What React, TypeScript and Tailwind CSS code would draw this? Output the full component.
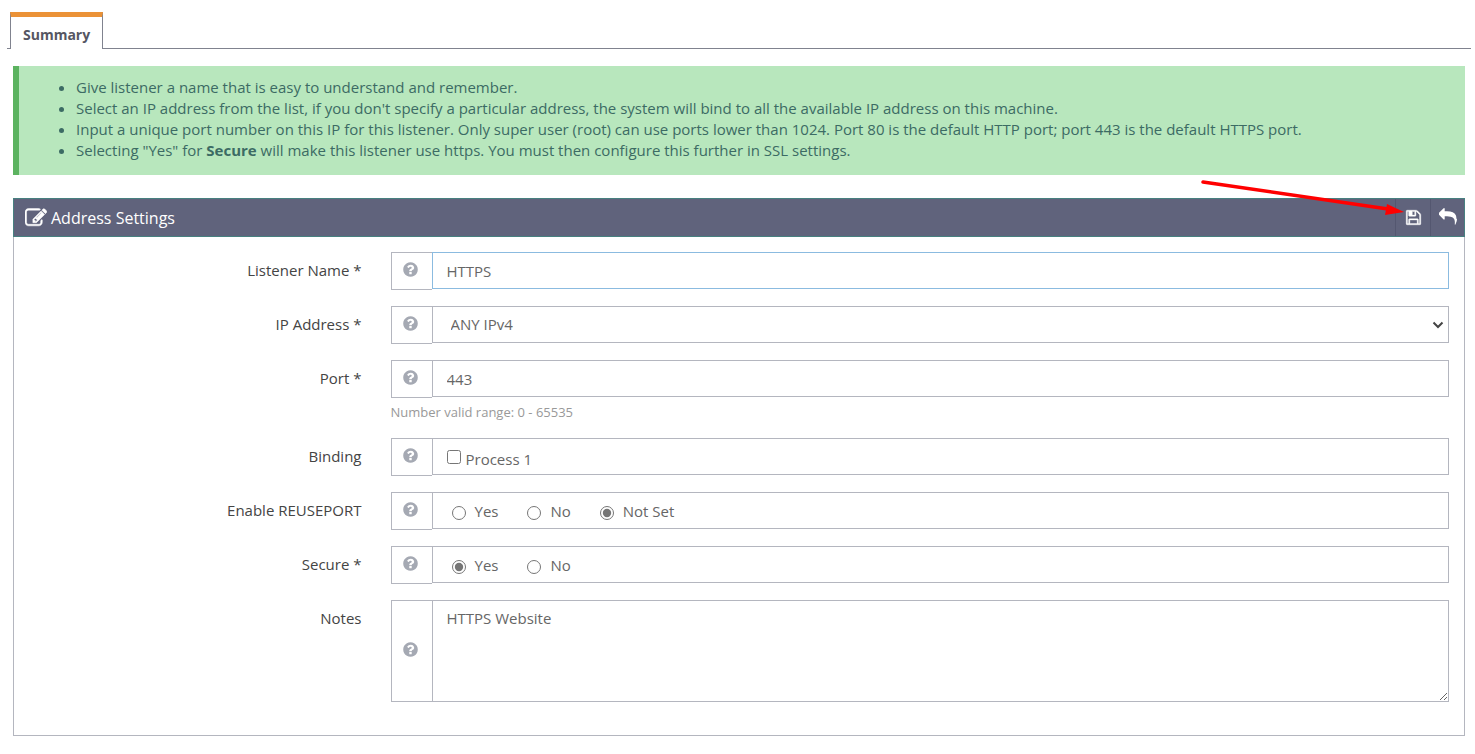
import { useState } from "react";
import type { ReactNode } from "react";

const iconPaths = {
  edit: "M888 1184l116-116-152-152-116 116v56h96v96h56zm440-720q-16-16-33 1l-350 350q-17 17-1 33t33-1l350-350q17-17 1-33zm80 594v190q0 119-84.5 203.5t-203.5 84.5h-832q-119 0-203.5-84.5t-84.5-203.5v-832q0-119 84.5-203.5t203.5-84.5h832q63 0 117 25 15 7 18 23 3 17-9 29l-49 49q-14 14-32 8-23-6-45-6h-832q-66 0-113 47t-47 113v832q0 66 47 113t113 47h832q66 0 113-47t47-113v-126q0-13 9-22l64-64q15-15 35-7t20 29zm-96-738l288 288-672 672h-288v-288zm444 132l-92 92-288-288 92-92q28-28 68-28t68 28l152 152q28 28 28 68t-28 68z",
  save: "M512 1536h768v-384h-768v384zm896 0h128v-896q0-14-10-38.5t-20-34.5l-281-281q-10-10-34-20t-39-10v416q0 40-28 68t-68 28h-576q-40 0-68-28t-28-68v-416h-128v1280h128v-416q0-40 28-68t68-28h832q40 0 68 28t28 68v416zm-384-928v-320q0-13-9.5-22.5t-22.5-9.5h-192q-13 0-22.5 9.5t-9.5 22.5v320q0 13 9.5 22.5t22.5 9.5h192q13 0 22.5-9.5t9.5-22.5zm640 32v928q0 40-28 68t-68 28h-1344q-40 0-68-28t-28-68v-1344q0-40 28-68t68-28h928q40 0 88 20t76 48l280 280q28 28 48 76t20 88z",
  reply: "M1792 1120q0 166-127 451-3 7-10.5 24t-13.5 30-13 22q-12 17-28 17-15 0-23.5-10t-8.5-25q0-9 2.5-26.5t2.5-23.5q5-68 5-123 0-112-19.5-200.5t-54-153.5-89-112-117.5-78.5-146-51-168.5-19.5-192-8h-224v256q0 26-19 45t-45 19-45-19l-512-512q-19-19-19-45t19-45l512-512q19-19 45-19t45 19 19 45v256h224q713 0 884 403 56 134 56 333z",
  help: "M1024 1376v-192q0-14-9-23t-23-9h-192q-14 0-23 9t-9 23v192q0 14 9 23t23 9h192q14 0 23-9t9-23zm256-672q0-88-55.5-163t-138.5-116-170-41q-243 0-371 213-15 24 8 42l132 100q7 6 19 6 16 0 25-12 53-68 86-92 34-24 86-24 48 0 85.5 26t37.5 59q0 38-20 61t-68 45q-63 28-115.5 86.5t-52.5 125.5v36q0 14 9 23t23 9h192q14 0 23-9t9-23q0-19 21.5-49.5t54.5-49.5q32-18 49-28.5t46-35 44.5-48 28-60.5 12.5-81zm384 192q0 209-103 385.5t-279.5 279.5-385.5 103-385.5-103-279.5-279.5-103-385.5 103-385.5 279.5-279.5 385.5-103 385.5 103 279.5 279.5 103 385.5z",
};

function Icon({ name, className }: { name: keyof typeof iconPaths; className: string }) {
  return (
    <svg viewBox="0 0 1792 1792" fill="currentColor" className={className} aria-hidden="true">
      <path d={iconPaths[name]} />
    </svg>
  );
}

type RowProps = {
  label: string;
  htmlFor?: string;
  help?: string;
  children: ReactNode;
};

function Row({ label, htmlFor, help, children }: RowProps) {
  const labelClass = "w-1/4 shrink-0 pt-2 pr-[15px] text-right leading-5 text-[#444]";
  return (
    <div
      className="flex"
      role={htmlFor ? undefined : "group"}
      aria-label={htmlFor ? undefined : label}
    >
      {htmlFor ? (
        <label htmlFor={htmlFor} className={labelClass}>
          {label}
        </label>
      ) : (
        <span className={labelClass}>{label}</span>
      )}
      <div className="min-w-0 flex-1 pr-[15px] pl-[14px]">
        <div className="flex">
          <button
            type="button"
            aria-label={`Help: ${label}`}
            className="flex min-h-[38px] w-[41px] shrink-0 items-center justify-center border border-r-0 border-[#b4b6bf] pr-[2px] pb-[3px] text-[#a5a9b3]"
          >
            <Icon name="help" className="size-[17px]" />
          </button>
          {children}
        </div>
        {help && <p className="pt-1 text-[13px] leading-5 text-[#999]">{help}</p>}
      </div>
    </div>
  );
}

type RadiosProps = {
  name: string;
  options: string[];
  value: string;
  onChange: (value: string) => void;
};

function Radios({ name, options, value, onChange }: RadiosProps) {
  return (
    <div className="flex h-[37px] flex-1 items-center gap-[29px] border border-[#b4b6bf] pl-[19px]">
      {options.map((option) => (
        <label key={option} className="flex items-center gap-[9px] leading-5">
          <input
            type="radio"
            name={name}
            checked={value === option}
            onChange={() => onChange(option)}
            className="mt-1 size-[14px] accent-[#757575]"
          />
          {option}
        </label>
      ))}
    </div>
  );
}

export default function App() {
  const [form, setForm] = useState({
    name: "HTTPS",
    address: "ANY IPv4",
    port: "443",
    binding: false,
    reusePort: "Not Set",
    secure: "Yes",
    notes: "HTTPS Website",
  });

  return (
    <div className="bg-white pt-3 pr-1 pb-4 pl-[7px] font-['Open_Sans','Noto_Sans',sans-serif] text-[15px] text-[#666]">
      <nav className="flex border-b border-[#80838f] pl-[3px]">
        <a
          href="#summary"
          className="-mb-px border-x border-t-5 border-x-[#80838f] border-t-[#eb9237] bg-white px-3 pt-2 pb-1 text-sm leading-5 font-bold text-[#555662]"
        >
          Summary
        </a>
      </nav>

      <main className="pt-[17px] pr-[6px] pl-[6px]">
        <div className="border-l-6 border-[#5cb360] bg-[#b8e7bd] pt-[11px] pb-[14px] pl-[57px] text-[#3c6b64]">
          <ul className="list-disc leading-[21px]">
            <li>Give listener a name that is easy to understand and remember.</li>
            <li>
              Select an IP address from the list, if you don't specify a particular address, the
              system will bind to all the available IP address on this machine.
            </li>
            <li>
              Input a unique port number on this IP for this listener. Only super user (root) can
              use ports lower than 1024. Port 80 is the default HTTP port; port 443 is the default
              HTTPS port.
            </li>
            <li>
              Selecting "Yes" for <b>Secure</b> will make this listener use https. You must then
              configure this further in SSL settings.
            </li>
          </ul>
        </div>

        <form
          id="summary"
          onSubmit={(e) => e.preventDefault()}
          className="mt-[23px] border border-t-0 border-[#b4b6bf]"
        >
          <div className="relative -mx-px flex h-[39px] border border-[#478080] bg-[#60637c] text-white">
            <h2 className="flex flex-1 items-center gap-1 pt-px pl-[11px] text-base">
              <Icon name="edit" className="size-[22px] stroke-white stroke-40" />
              Address Settings
            </h2>
            <button
              type="submit"
              aria-label="Save"
              className="flex w-[35px] items-center justify-center border-l border-[#545770] pb-px"
            >
              <Icon name="save" className="size-[17px] stroke-white stroke-40" />
            </button>
            <button
              type="button"
              aria-label="Back"
              className="flex w-[34px] items-center justify-center border-l border-[#545770] pb-px"
            >
              <Icon name="reply" className="size-[18px]" />
            </button>
            {/* pointer to the save button */}
            <svg
              viewBox="0 0 204 38"
              className="pointer-events-none absolute -top-5 right-[60px] h-[38px] w-[204px]"
              aria-hidden="true"
            >
              <path d="M3 3L188 30" stroke="#f00" strokeWidth="3.5" strokeLinecap="round" />
              <path d="M187 25L204 33L185 36z" fill="#f00" />
            </svg>
          </div>

          <div className="flex flex-col gap-4 pt-[15px] pb-[33px]">
            <Row label="Listener Name *" htmlFor="name">
              <input
                id="name"
                type="text"
                value={form.name}
                onChange={(e) => setForm({ ...form, name: e.target.value })}
                className="h-[37px] min-w-0 flex-1 border border-[#8bbbe0] px-[14px] outline-none"
              />
            </Row>
            <Row label="IP Address *" htmlFor="address">
              <div className="relative h-[37px] flex-1">
                <select
                  id="address"
                  value={form.address}
                  onChange={(e) => setForm({ ...form, address: e.target.value })}
                  className="size-full appearance-none border border-[#b4b6bf] bg-white px-[18px]"
                >
                  <option>ANY IPv4</option>
                </select>
                <svg
                  viewBox="0 0 12 8"
                  className="pointer-events-none absolute top-[15px] right-[5px] h-2 w-3"
                  aria-hidden="true"
                >
                  <path d="M1.5 1.5L6 6L10.5 1.5" fill="none" stroke="#444" strokeWidth="2" />
                </svg>
              </div>
            </Row>
            <Row label="Port *" htmlFor="port" help="Number valid range: 0 - 65535">
              <input
                id="port"
                type="text"
                value={form.port}
                onChange={(e) => setForm({ ...form, port: e.target.value })}
                className="h-[37px] min-w-0 flex-1 border border-[#b4b6bf] px-[14px]"
              />
            </Row>
            <Row label="Binding">
              <div className="flex h-[37px] flex-1 items-center border border-[#b4b6bf] px-[14px]">
                <label className="flex items-center gap-[5px] pt-1 leading-5">
                  <input
                    type="checkbox"
                    checked={form.binding}
                    onChange={(e) => setForm({ ...form, binding: e.target.checked })}
                    className="mb-1 size-[14px]"
                  />
                  Process 1
                </label>
              </div>
            </Row>
            <Row label="Enable REUSEPORT">
              <Radios
                name="reusePort"
                options={["Yes", "No", "Not Set"]}
                value={form.reusePort}
                onChange={(reusePort) => setForm({ ...form, reusePort })}
              />
            </Row>
            <Row label="Secure *">
              <Radios
                name="secure"
                options={["Yes", "No"]}
                value={form.secure}
                onChange={(secure) => setForm({ ...form, secure })}
              />
            </Row>
            <Row label="Notes" htmlFor="notes">
              <textarea
                id="notes"
                value={form.notes}
                onChange={(e) => setForm({ ...form, notes: e.target.value })}
                className="h-[102px] min-w-0 flex-1 border border-[#b4b6bf] px-[14px] py-[7px] leading-5"
              />
            </Row>
          </div>
        </form>
      </main>
    </div>
  );
}
